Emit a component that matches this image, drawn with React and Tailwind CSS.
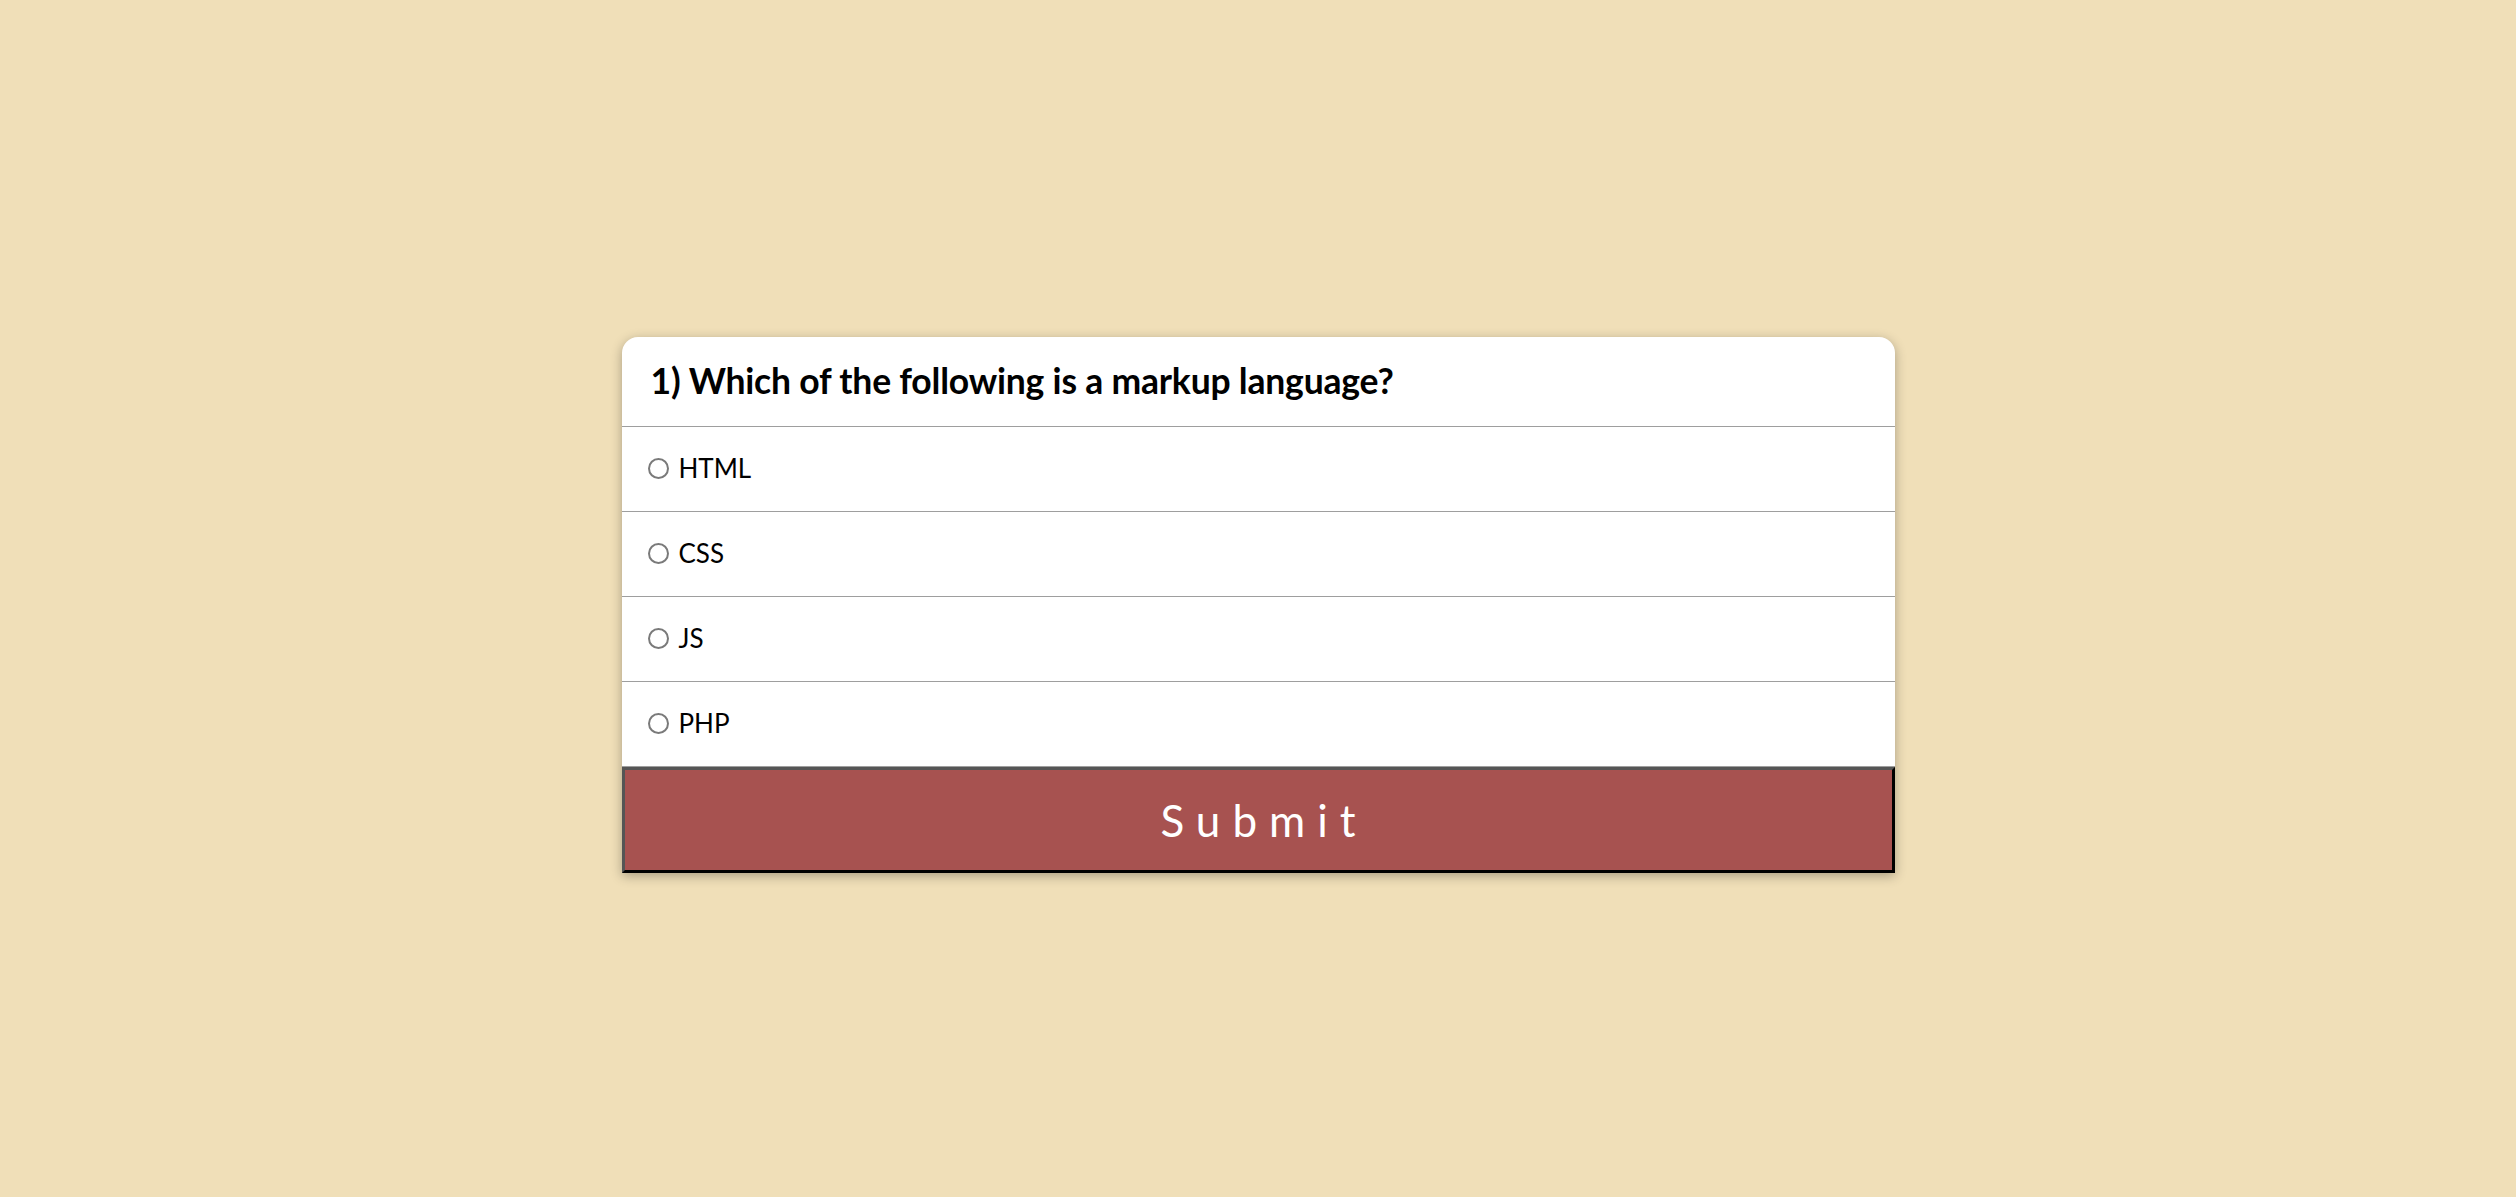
import React from "react";

const options = ["HTML", "CSS", "JS", "PHP"];

export default function App() {
  return (
    <div
      className="w-full h-[1197px] bg-[#f0dfb8] flex items-center justify-center pt-[12px]"
      style={{ fontFamily: "Lato, 'Open Sans', sans-serif" }}
    >
      <div className="w-[1273px] bg-white rounded-t-[16px] shadow-[0_3px_12px_rgba(0,0,0,0.3)] flex flex-col">
        <div className="h-[90px] flex items-center pl-[29px] border-b border-[#9e9e9e]">
          <h2 className="text-[35.5px] font-bold text-black tracking-[-0.2px]">
            1) Which of the following is a markup language?
          </h2>
        </div>
        {options.map((o) => (
          <label
            key={o}
            className="h-[85px] flex items-center pl-[26px] gap-[10px] border-b border-[#9e9e9e] last:border-b-0 text-[26px] text-black"
          >
            <input
              type="radio"
              name="answer"
              className="appearance-none w-[21px] h-[21px] rounded-full border-[2px] border-[#7a7a7a] bg-white m-0"
            />
            <span>{o}</span>
          </label>
        ))}
        <button className="h-[106px] w-full bg-[#a75250] border-[3px] border-t-[#555555] border-l-[#555555] border-r-black border-b-black text-white text-[44px] tracking-[12px] pl-[12px] flex items-center justify-center">
          Submit
        </button>
      </div>
    </div>
  );
}
